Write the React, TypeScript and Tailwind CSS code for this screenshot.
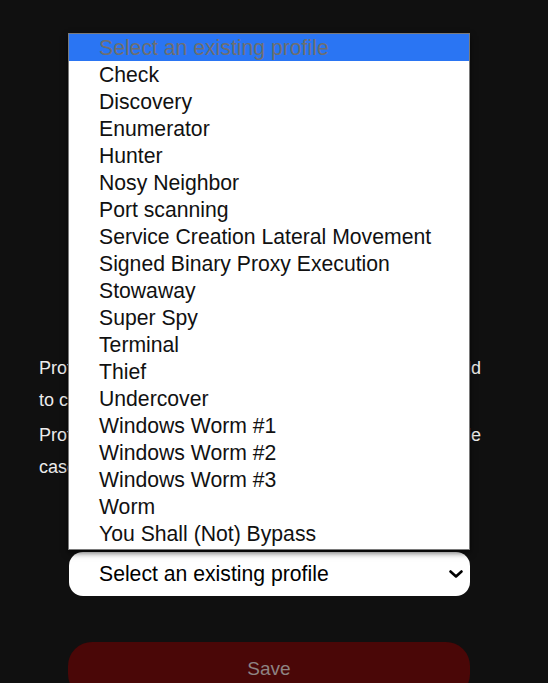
import React from "react";

const profiles = [
  "Check",
  "Discovery",
  "Enumerator",
  "Hunter",
  "Nosy Neighbor",
  "Port scanning",
  "Service Creation Lateral Movement",
  "Signed Binary Proxy Execution",
  "Stowaway",
  "Super Spy",
  "Terminal",
  "Thief",
  "Undercover",
  "Windows Worm #1",
  "Windows Worm #2",
  "Windows Worm #3",
  "Worm",
  "You Shall (Not) Bypass",
];

export default function App() {
  return (
    <div className="relative h-[683px] w-full overflow-hidden bg-[#101010] [font-family:'Liberation_Sans',Arial,sans-serif]">
      <div className="flex flex-col pt-[352px]">
        <div className="pl-[39px] w-[483px] text-[18px] leading-[32px] text-[#ececec]">
          <p className="mb-[3px]">
            <span className="block pr-[2px] text-justify [text-align-last:justify] whitespace-nowrap">
              Profiles are sets of abilities that agents would
            </span>
            <span className="block">to conduct an operation.</span>
          </p>
          <p>
            <span className="block pr-[2px] text-justify [text-align-last:justify] whitespace-nowrap">
              Profiles may be chained together where possible
            </span>
            <span className="block">case of an advanced operation.</span>
          </p>
        </div>

        <div className="mt-[69px] ml-[69px] w-[401px] h-[44px] rounded-[14px] bg-white flex items-center justify-between pl-[30px] pr-[7px]">
          <span className="text-[21.2px] text-black">Select an existing profile</span>
          <svg width="14" height="8" viewBox="0 0 14 8">
            <path d="M1.5 1.5 L7 6.5 L12.5 1.5" fill="none" stroke="#000" strokeWidth="2.6" strokeLinecap="round" strokeLinejoin="round" />
          </svg>
        </div>

        <div className="mt-[46px] ml-[68px] w-[402px] h-[56px] rounded-[24px] bg-[#4a0707] flex items-start justify-center pt-[13px]">
          <span className="text-[19px] text-[#8e8383]">Save</span>
        </div>
      </div>

      <div className="absolute left-[68px] top-[33px] w-[402px] h-[517px] bg-white border border-[#7a7a7a] shadow-[0_3px_6px_rgba(0,0,0,0.6)] flex flex-col">
        <div className="h-[27px] bg-[#2a75f3] flex items-center pl-[30px] text-[21.2px] text-[#6f6f6f] leading-none">
          Select an existing profile
        </div>
        {profiles.map((p) => (
          <div key={p} className="h-[27px] flex items-center pl-[30px] text-[21.2px] text-[#111] leading-none">
            {p}
          </div>
        ))}
      </div>
    </div>
  );
}
